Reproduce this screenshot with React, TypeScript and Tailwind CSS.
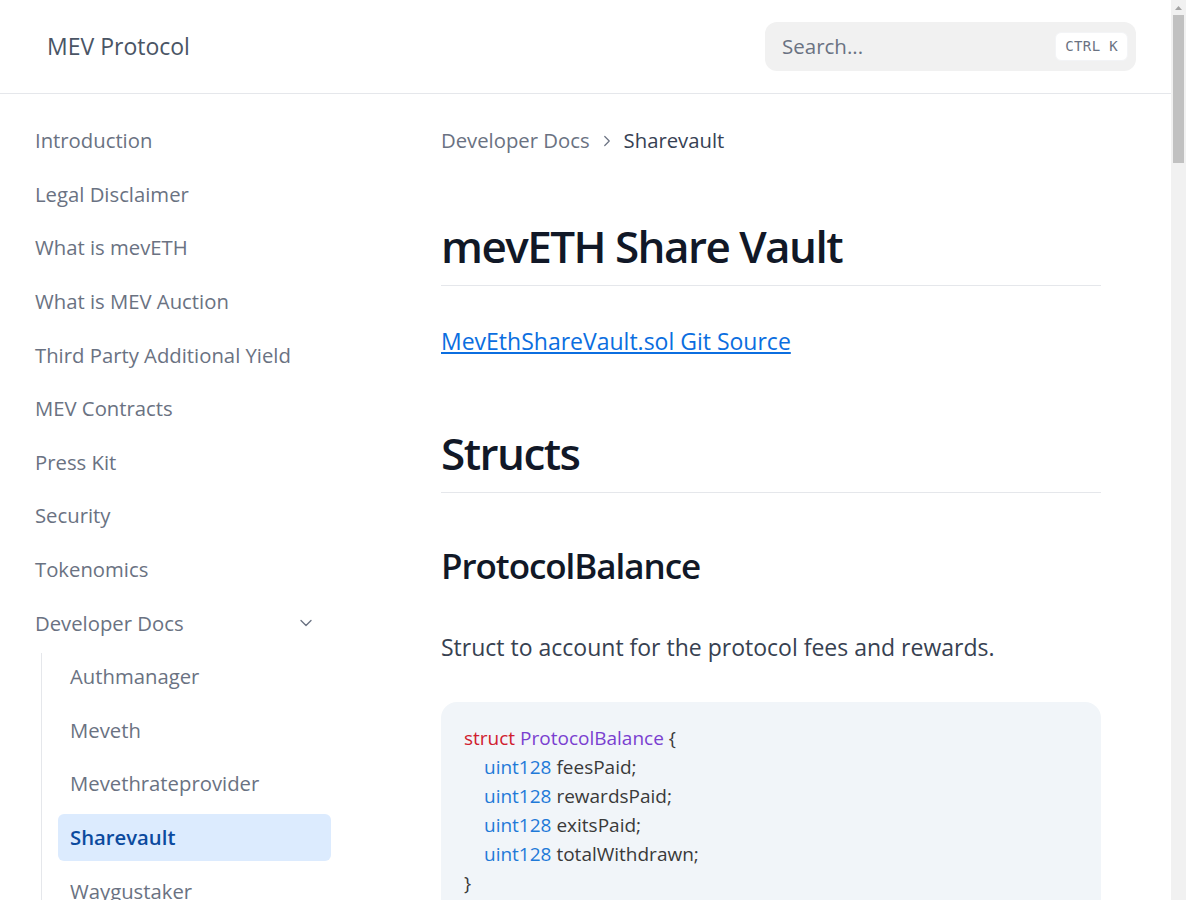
import { ChevronDown, ChevronRight } from "lucide-react";

const navItems = [
  "Introduction",
  "Legal Disclaimer",
  "What is mevETH",
  "What is MEV Auction",
  "Third Party Additional Yield",
  "MEV Contracts",
  "Press Kit",
  "Security",
  "Tokenomics",
];

const devDocs = ["Authmanager", "Meveth", "Mevethrateprovider", "Sharevault", "Waygustaker", "Wagyustakingmodule"];

const fields = ["feesPaid", "rewardsPaid", "exitsPaid", "totalWithdrawn"];

const functions = ["constructor", "payRewards", "fees", "rewards"];

export default function App() {
  return (
    <div className="h-screen flex bg-white text-gray-700" style={{ fontFamily: '"Open Sans", "Noto Sans", sans-serif' }}>
      <div className="flex-1 min-w-0 overflow-hidden">
        {/* top bar */}
        <header className="h-[94px] border-b border-gray-200 flex items-center justify-between pl-[47px] pr-[35px]">
          <span className="text-[23px] text-gray-600">MEV Protocol</span>
          <div className="w-[371px] h-[49px] rounded-xl bg-[#f1f1f1] flex items-center justify-between pl-[17px] pr-[8px]">
            <span className="text-[20.5px] text-gray-500">Search...</span>
            <kbd
              className="h-[29px] px-[9px] rounded-md bg-white border border-gray-100 flex items-center text-[14px] text-gray-500 tracking-wide"
              style={{ fontFamily: '"DejaVu Sans Mono", monospace' }}
            >
              CTRL&nbsp;K
            </kbd>
          </div>
        </header>

        <div className="flex">
          {/* sidebar */}
          <aside className="w-[441px] shrink-0 pl-[35px] pt-[23px]">
            <nav className="w-[296px] flex flex-col gap-[6.6px] text-[20.3px] text-gray-500">
              {navItems.map((t) => (
                <div key={t} className="h-[47px] flex items-center">
                  {t}
                </div>
              ))}
              <div className="h-[47px] flex items-center justify-between pr-[15px]">
                <span>Developer Docs</span>
                <ChevronDown size={20} strokeWidth={1.6} className="text-gray-500" />
              </div>
              <div className="ml-[6px] border-l border-gray-200 pl-[16px] flex flex-col gap-[6.6px]">
                {devDocs.map((t) =>
                  t === "Sharevault" ? (
                    <div key={t} className="h-[47px] flex items-center px-3 rounded-md bg-[#dcebfe] text-[#0b4a9e] font-semibold">
                      {t}
                    </div>
                  ) : (
                    <div key={t} className="h-[47px] flex items-center px-3">
                      {t}
                    </div>
                  )
                )}
              </div>
            </nav>
          </aside>

          {/* main */}
          <main className="w-[660px] pt-[23px] pb-20">
            <div className="h-[47px] flex items-center gap-[8px] text-[20.3px]">
              <span className="text-gray-500">Developer Docs</span>
              <ChevronRight size={18} strokeWidth={1.6} className="text-gray-500" />
              <span className="text-gray-700">Sharevault</span>
            </div>

            <h1 className="mt-[55px] pb-[12px] border-b border-gray-200 text-[44px] leading-[1.23] font-semibold tracking-[-0.035em] text-[#111827]">
              mevETH Share Vault
            </h1>

            <p className="mt-[38px] text-[23px]">
              <a href="#" className="text-[#0b6ee0] underline underline-offset-2">
                MevEthShareVault.sol Git Source
              </a>
            </p>

            <h2 className="mt-[67px] pb-[12px] border-b border-gray-200 text-[44px] leading-[1.23] font-semibold tracking-[-0.035em] text-[#111827]">
              Structs
            </h2>

            <h3 className="mt-[52px] text-[35px] leading-[1.2] font-semibold tracking-[-0.03em] text-[#111827]">
              ProtocolBalance
            </h3>

            <p className="mt-[43px] text-[23px] text-[#374151]">Struct to account for the protocol fees and rewards.</p>

            <pre
              className="mt-[38px] rounded-2xl bg-[#f1f5f9] px-[23px] py-[22px] text-[19px] leading-[29px] text-[#3a3a3a]"
              style={{ fontFamily: '"Open Sans", "Noto Sans", sans-serif' }}
            >
              <div>
                <span className="text-[#d0202f]">struct</span> <span className="text-[#7a3fd0]">ProtocolBalance</span> {"{"}
              </div>
              {fields.map((f) => (
                <div key={f} className="pl-[20px]">
                  <span className="text-[#1f7ad8]">uint128</span> {f};
                </div>
              ))}
              <div>{"}"}</div>
            </pre>

            <h2 className="mt-[67px] pb-[12px] border-b border-gray-200 text-[44px] leading-[1.23] font-semibold tracking-[-0.035em] text-[#111827]">
              Functions
            </h2>
            {functions.map((fn) => (
              <h3 key={fn} className="mt-[52px] text-[35px] leading-[1.2] font-semibold tracking-[-0.03em] text-[#111827]">
                {fn}
              </h3>
            ))}
          </main>
        </div>
      </div>

      {/* page scrollbar */}
      <div className="w-[15px] shrink-0 bg-[#f1f1f1] flex flex-col items-center">
        <div className="h-[15px] flex items-center justify-center">
          <svg width="7" height="4" viewBox="0 0 7 4">
            <path d="M0 4 L3.5 0 L7 4 Z" fill="#a3a3a3" />
          </svg>
        </div>
        <div className="w-[11px] h-[148px] bg-[#c1c1c1]" />
      </div>
    </div>
  );
}
